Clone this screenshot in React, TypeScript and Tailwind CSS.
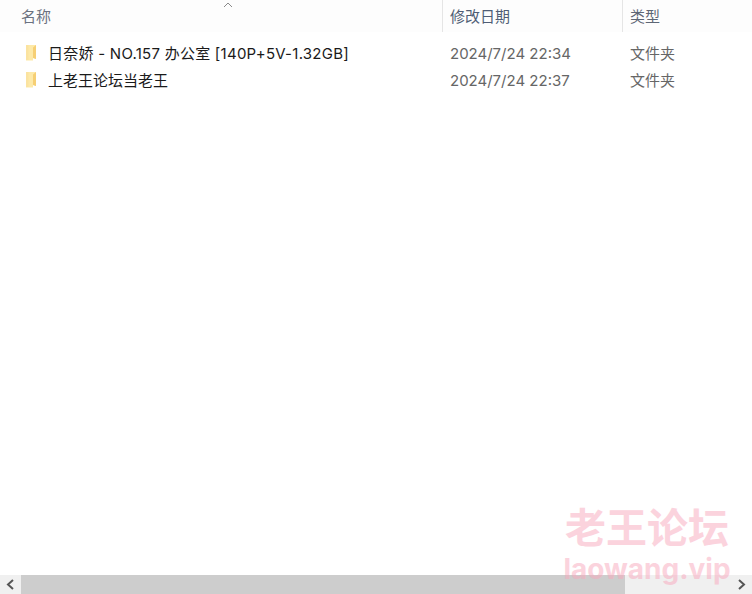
import React from "react";

const FONT = "font-['Inter','Noto_Sans_CJK_SC',sans-serif]";

const rows = [
  { name: "日奈娇 - NO.157 办公室 [140P+5V-1.32GB]", nameClass: "tracking-[0.25px]", date: "2024/7/24 22:34", type: "文件夹" },
  { name: "上老王论坛当老王", nameClass: "", date: "2024/7/24 22:37", type: "文件夹" },
];

function FolderIcon() {
  return (
    <svg width="13" height="17" viewBox="0 0 13 17" className="mb-1 shrink-0">
      <path d="M1 1h10v14l-3-1v2.5H1z" fill="#fde9a8" />
      <path d="M1 1h2.5v15H1z" fill="#fbe3a0" />
      <path d="M8 3.5L11 1v14l-3-1z" fill="#f6cf74" />
    </svg>
  );
}

export default function App() {
  return (
    <div className={`relative flex h-[594px] w-[752px] flex-col overflow-hidden bg-white ${FONT}`}>
      {/* Header */}
      <div className="relative flex h-8 shrink-0 items-center bg-[#fdfdfd] text-[15px] text-[#4f5d75]">
        <div className="h-full w-[442px] pl-[21px] pt-px leading-8 text-[#6b7280]">名称</div>
        <div className="h-full w-[180px] border-l border-[#e5e5e5] pl-[7px] pt-px leading-8">修改日期</div>
        <div className="h-full flex-1 border-l border-[#e5e5e5] pl-[7px] pt-px leading-8 text-[#5d6675]">类型</div>
        <svg width="10" height="6" viewBox="0 0 10 6" className="absolute left-[223px] top-0.5">
          <path d="M1 5l4-4 4 4" fill="none" stroke="#8a8a8a" strokeWidth="1" />
        </svg>
      </div>

      {/* Rows */}
      <div className="mt-[9px] flex flex-1 flex-col">
        {rows.map((r) => (
          <div key={r.name} className="flex h-[27px] items-center text-[15px]">
            <div className="flex w-[442px] items-center pl-[25px] text-[#1a1a1a]">
              <FolderIcon />
              <span className={`ml-[10px] whitespace-nowrap ${r.nameClass}`}>{r.name}</span>
            </div>
            <div className="w-[180px] pl-[8px] text-[#666666]">{r.date}</div>
            <div className="pl-[8px] text-[#666666]">{r.type}</div>
          </div>
        ))}
      </div>

      {/* Horizontal scrollbar */}
      <div className="flex h-[19px] shrink-0 bg-[#f0f0f0]">
        <div className="flex w-[21px] items-center justify-center">
          <svg width="9" height="11" viewBox="0 0 9 11">
            <path d="M7 1L2 5.5 7 10" fill="none" stroke="#555555" strokeWidth="2" />
          </svg>
        </div>
        <div className="w-[604px] bg-[#cdcdcd]" />
        <div className="flex-1" />
        <div className="flex w-[21px] items-center justify-center">
          <svg width="9" height="11" viewBox="0 0 9 11">
            <path d="M2 1l5 4.5L2 10" fill="none" stroke="#555555" strokeWidth="2" />
          </svg>
        </div>
      </div>

      {/* Watermark */}
      <div className="pointer-events-none absolute left-[564px] top-[504px] flex w-[166px] flex-col items-center text-[#f9a8bd] opacity-50">
        <div className="whitespace-nowrap text-[41px] font-bold leading-[48px]">老王论坛</div>
        <div className="whitespace-nowrap text-[28px] font-bold leading-[34px]">laowang.vip</div>
      </div>
    </div>
  );
}
